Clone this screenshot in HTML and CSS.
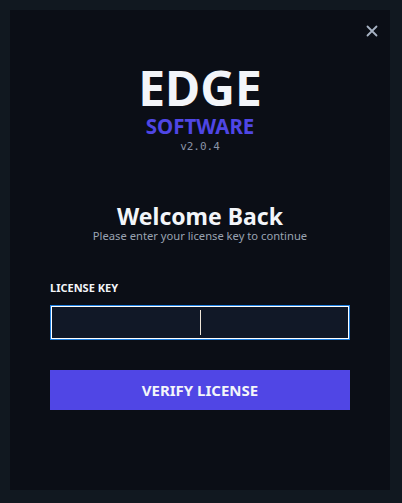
FILE: index.html
```html
<!DOCTYPE html>
<html>
<head>
<meta charset="utf-8">
<link rel="stylesheet" href="styles.css">
</head>
<body>
<div class="card">
  <button class="close" aria-label="Close">
    <svg width="12" height="12" viewBox="0 0 12 12"><path d="M1.5 1.5 L10.5 10.5 M10.5 1.5 L1.5 10.5" stroke="#a8b3c4" stroke-width="1.8" stroke-linecap="round"/></svg>
  </button>
  <div class="brand">
    <div class="logo">EDGE</div>
    <div class="sub">SOFTWARE</div>
    <div class="ver">v2.0.4</div>
  </div>
  <div class="welcome">
    <h1>Welcome Back</h1>
    <p>Please enter your license key to continue</p>
  </div>
  <label class="label">LICENSE KEY</label>
  <div class="input"><span class="caret"></span></div>
  <button class="verify">VERIFY LICENSE</button>
</div>
</body>
</html>
```
FILE: styles.css
```css
* { box-sizing: border-box; }
html, body { margin: 0; padding: 0; }
body {
  background: #111820;
  width: 402px;
  height: 503px;
  padding: 10px 12px 13px 10px;
  font-family: "Noto Sans", "Open Sans", sans-serif;
}
.card {
  position: relative;
  background: #0b0e16;
  height: 480px;
  width: 380px;
  padding: 51px 40px 0 40px;
  display: flex;
  flex-direction: column;
}
.close {
  position: absolute;
  top: 15px;
  right: 12px;
  background: none;
  border: 0;
  padding: 0;
  width: 12px;
  height: 12px;
  display: flex;
}
.brand {
  display: flex;
  flex-direction: column;
  align-items: center;
}
.logo {
  font-size: 48px;
  font-weight: 700;
  color: #f3f5f9;
  line-height: 54px;
}
.sub {
  font-size: 20.5px;
  font-weight: 700;
  color: #4f46e5;
  line-height: 22px;
}
.ver {
  font-family: "DejaVu Sans Mono", monospace;
  font-size: 11px;
  color: #8a94a6;
  line-height: 14px;
  margin-top: 3px;
}
.welcome {
  margin-top: 49px;
  text-align: center;
}
.welcome h1 {
  margin: 0;
  font-size: 23px;
  font-weight: 700;
  color: #f3f5f9;
  line-height: 26px;
}
.welcome p {
  margin: 0;
  font-size: 11.2px;
  color: #9aa3b2;
  line-height: 14px;
}
.label {
  margin-top: 38px;
  font-size: 11px;
  font-weight: 700;
  color: #f3f5f9;
  line-height: 14px;
}
.input {
  margin-top: 10px;
  height: 35px;
  background: #111827;
  border: 1px solid #1e7fe0;
  box-shadow: inset 0 0 0 1px #ffffff;
  display: flex;
  justify-content: center;
  align-items: center;
}
.caret {
  width: 1px;
  height: 25px;
  background: #f0e6d8;
}
.verify {
  margin-top: 30px;
  height: 40px;
  width: 300px;
  background: #5046e5;
  border: 0;
  color: #f3f5f9;
  font-family: "Noto Sans", "Open Sans", sans-serif;
  font-size: 15px;
  font-weight: 700;
}
```
